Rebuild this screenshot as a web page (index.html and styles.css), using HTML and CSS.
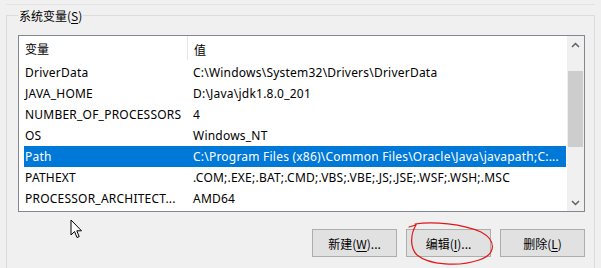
FILE: index.html
```html
<!DOCTYPE html>
<html lang="zh-CN">
<head>
<meta charset="utf-8">
<title>系统变量</title>
<link rel="stylesheet" href="styles.css">
</head>
<body>
<div class="topline"></div>
<fieldset class="group">
  <legend class="legend">系统变量(<u>S</u>)</legend>
  <div class="list">
    <div class="table">
      <div class="header">
        <div class="c1 hcell">变量</div>
        <div class="c2 hcell">值</div>
      </div>
      <div class="row"><div class="c1">DriverData</div><div class="c2">C:\Windows\System32\Drivers\DriverData</div></div>
      <div class="row"><div class="c1">JAVA_HOME</div><div class="c2">D:\Java\jdk1.8.0_201</div></div>
      <div class="row"><div class="c1">NUMBER_OF_PROCESSORS</div><div class="c2">4</div></div>
      <div class="row"><div class="c1">OS</div><div class="c2">Windows_NT</div></div>
      <div class="row selected"><div class="c1">Path</div><div class="c2">C:\Program Files (x86)\Common Files\Oracle\Java\javapath;C:...</div></div>
      <div class="row"><div class="c1">PATHEXT</div><div class="c2">.COM;.EXE;.BAT;.CMD;.VBS;.VBE;.JS;.JSE;.WSF;.WSH;.MSC</div></div>
      <div class="row"><div class="c1">PROCESSOR_ARCHITECT...</div><div class="c2">AMD64</div></div>
    </div>
    <div class="scrollbar">
      <div class="arrow">
        <svg width="9" height="6" viewBox="0 0 9 6"><path d="M1 5 L4.5 1.5 L8 5" fill="none" stroke="#606060" stroke-width="1.5"/></svg>
      </div>
      <div class="track">
        <div class="thumb"></div>
      </div>
      <div class="arrow">
        <svg width="9" height="6" viewBox="0 0 9 6"><path d="M1 1 L4.5 4.5 L8 1" fill="none" stroke="#606060" stroke-width="1.5"/></svg>
      </div>
    </div>
  </div>
  <div class="buttons">
    <button class="btn">新建(<u>W</u>)...</button>
    <button class="btn">编辑(<u>I</u>)...</button>
    <button class="btn">删除(<u>L</u>)</button>
  </div>
  <svg class="mark" width="100" height="50" viewBox="0 0 100 50">
    <path d="M14 7 C32 4 62 7 80 15 C95 23 96 37 78 43 C58 50 28 48 16 38 C9 31 9 18 15 8 L8 10" fill="none" stroke="#e01818" stroke-width="1.2" stroke-linecap="round"/>
  </svg>
</fieldset>
<svg class="cursor" width="14" height="21" viewBox="0 0 14 21">
  <path d="M1 1 L1 16 L4.5 12.5 L7 18.5 L9.2 17.6 L6.8 11.8 L11.5 11.8 Z" fill="#fff" stroke="#000" stroke-width="1" stroke-linejoin="round"/>
</svg>
</body>
</html>
```

FILE: styles.css
```css
* { box-sizing: border-box; }
html, body {
  margin: 0;
  padding: 0;
  background: #f0f0f0;
  width: 601px;
  height: 268px;
  overflow: hidden;
  font-family: "Noto Sans", "Noto Sans CJK SC", sans-serif;
  font-size: 12px;
  color: #000;
}
.topline {
  height: 5px;
  margin: 0 6px;
  border-bottom: 1px solid #e3e3e3;
}
.group {
  position: relative;
  margin: 2px 6px 0 6px;
  padding: 0 9px 0 11px;
  border: 1px solid #dcdcdc;
  min-height: 270px;
}
.legend {
  padding: 0 1px;
  margin-left: 0;
  font-family: "Noto Sans CJK SC", sans-serif;
  font-size: 12px;
  line-height: 17px;
  color: #000;
}
.legend u { text-decoration-thickness: 1px; text-underline-offset: 2px; }
.list {
  margin-top: 11px;
  height: 177px;
  border: 1px solid #828790;
  background: #fff;
  display: flex;
}
.table {
  flex: 1;
  min-width: 0;
}
.header {
  display: flex;
  height: 26px;
  align-items: center;
}
.hcell {
  height: 100%;
  display: flex;
  align-items: center;
  font-family: "Noto Sans CJK SC", sans-serif;
}
.header .c1 { border-right: 1px solid #e5e5e5; height: 24px; align-self: flex-start; }
.row {
  display: flex;
  height: 21px;
  align-items: center;
  margin-left: 5px;
  white-space: nowrap;
  letter-spacing: 0.22px;
}
.c1 {
  width: 168px;
  padding-left: 6px;
  white-space: nowrap;
  overflow: hidden;
}
.header .c1 { width: 169px; }
.row .c1 { width: 163px; padding-left: 1px; }
.c2 {
  flex: 1;
  padding-left: 6px;
  white-space: nowrap;
  overflow: hidden;
}
.selected {
  background: #0078d7;
  color: #fff;
}
.scrollbar {
  width: 18px;
  background: #f0f0f0;
  border-left: 1px solid #fff;
  display: flex;
  flex-direction: column;
}
.arrow {
  height: 17px;
  display: flex;
  align-items: center;
  justify-content: center;
}
.track {
  flex: 1;
  padding-top: 18px;
}
.thumb {
  margin: 0 1px;
  height: 76px;
  background: #cdcdcd;
}
.buttons {
  display: flex;
  justify-content: flex-end;
  gap: 9px;
  margin-top: 17px;
}
.btn {
  width: 85px;
  height: 28px;
  background: #e1e1e1;
  border: 1px solid #adadad;
  font-family: "Noto Sans CJK SC", sans-serif;
  font-size: 12px;
  color: #000;
  padding: 0;
}
.btn u { text-decoration-thickness: 1px; text-underline-offset: 2px; }
.mark {
  position: absolute;
  left: 394px;
  top: 193px;
}
.cursor {
  position: absolute;
  left: 70px;
  top: 219px;
}
```
